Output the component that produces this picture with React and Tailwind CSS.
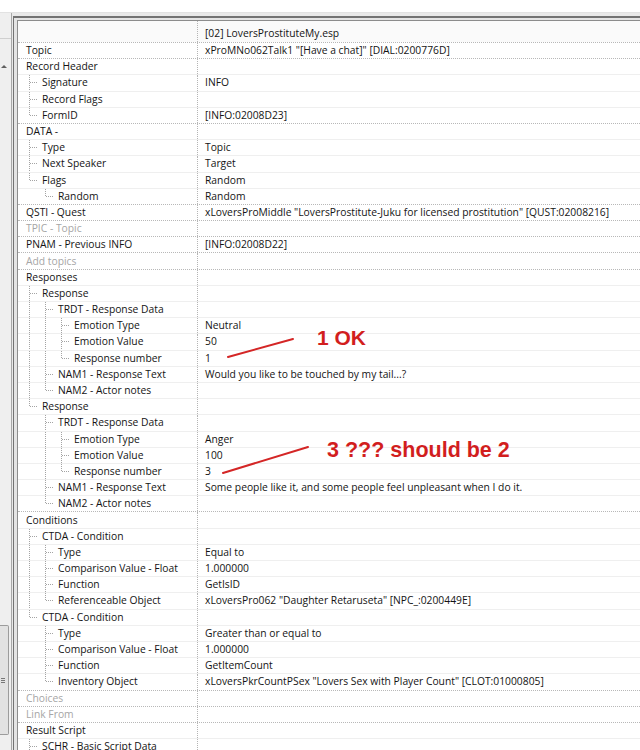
import React from "react";

const tree = [
  { label: "Topic", value: 'xProMNo062Talk1 "[Have a chat]" [DIAL:0200776D]' },
  {
    label: "Record Header",
    children: [
      { label: "Signature", value: "INFO" },
      { label: "Record Flags" },
      { label: "FormID", value: "[INFO:02008D23]" },
    ],
  },
  {
    label: "DATA -",
    children: [
      { label: "Type", value: "Topic" },
      { label: "Next Speaker", value: "Target" },
      { label: "Flags", value: "Random", children: [{ label: "Random", value: "Random" }] },
    ],
  },
  {
    label: "QSTI - Quest",
    value: 'xLoversProMiddle "LoversProstitute-Juku for licensed prostitution" [QUST:02008216]',
  },
  { label: "TPIC - Topic", muted: true },
  { label: "PNAM - Previous INFO", value: "[INFO:02008D22]" },
  { label: "Add topics", muted: true },
  {
    label: "Responses",
    children: [
      {
        label: "Response",
        children: [
          {
            label: "TRDT - Response Data",
            children: [
              { label: "Emotion Type", value: "Neutral" },
              { label: "Emotion Value", value: "50" },
              { label: "Response number", value: "1" },
            ],
          },
          { label: "NAM1 - Response Text", value: "Would you like to be touched by my tail...?" },
          { label: "NAM2 - Actor notes" },
        ],
      },
      {
        label: "Response",
        children: [
          {
            label: "TRDT - Response Data",
            children: [
              { label: "Emotion Type", value: "Anger" },
              { label: "Emotion Value", value: "100" },
              { label: "Response number", value: "3" },
            ],
          },
          {
            label: "NAM1 - Response Text",
            value: "Some people like it, and some people feel unpleasant when I do it.",
          },
          { label: "NAM2 - Actor notes" },
        ],
      },
    ],
  },
  {
    label: "Conditions",
    children: [
      {
        label: "CTDA - Condition",
        children: [
          { label: "Type", value: "Equal to" },
          { label: "Comparison Value - Float", value: "1.000000" },
          { label: "Function", value: "GetIsID" },
          {
            label: "Referenceable Object",
            value: 'xLoversPro062 "Daughter Retaruseta" [NPC_:0200449E]',
          },
        ],
      },
      {
        label: "CTDA - Condition",
        children: [
          { label: "Type", value: "Greater than or equal to" },
          { label: "Comparison Value - Float", value: "1.000000" },
          { label: "Function", value: "GetItemCount" },
          {
            label: "Inventory Object",
            value: 'xLoversPkrCountPSex "Lovers Sex with Player Count" [CLOT:01000805]',
          },
        ],
      },
    ],
  },
  { label: "Choices", muted: true },
  { label: "Link From", muted: true },
  {
    label: "Result Script",
    children: [
      { label: "SCHR - Basic Script Data" },
      { label: "SCTX - Script Source" },
    ],
  },
];

// flatten the tree so every row knows which guide lines to draw
const flatten = (nodes, depth, parentsLast, out) => {
  nodes.forEach((n, i) => {
    const last = i === nodes.length - 1;
    out.push({ ...n, depth, parentsLast, last });
    if (n.children) flatten(n.children, depth + 1, [...parentsLast, last], out);
  });
  return out;
};

const rows = flatten(tree, 0, [], []);

const Guides = ({ depth, parentsLast, last }) => {
  const w = 8 + 16 * depth;
  const lines = [];
  for (let k = 1; k < depth; k++) {
    if (!parentsLast[k]) {
      const x = 11.5 + 16 * (k - 1);
      lines.push(<line key={k} x1={x} y1="0" x2={x} y2="16" />);
    }
  }
  if (depth > 0) {
    const x = 11.5 + 16 * (depth - 1);
    lines.push(<line key="v" x1={x} y1="0" x2={x} y2={last ? 8 : 16} />);
    lines.push(<line key="h" x1={x} y1="7.5" x2={x + 8} y2="7.5" />);
  }
  return (
    <svg
      width={w}
      height="15"
      className="shrink-0"
      stroke="#a4a4a4"
      strokeWidth="1"
      strokeDasharray="1 1"
      shapeRendering="crispEdges"
    >
      {lines}
    </svg>
  );
};

const Row = ({ row }) => (
  <div
    className={`flex h-[16.2px] shrink-0 border-t ${
      row.depth === 0 ? "border-dotted border-[#b8b8b8]" : "border-solid border-[#efefef]"
    }`}
  >
    <div className="flex w-[180px] shrink-0 items-center border-r border-dotted border-[#b4b4b4]">
      <Guides depth={row.depth} parentsLast={row.parentsLast} last={row.last} />
      <span className={`whitespace-nowrap ${row.muted ? "text-[#a6a6a6]" : "text-[#141414]"}`}>
        {row.label}
      </span>
    </div>
    <div className="flex items-center whitespace-nowrap pl-[7px] text-[#141414]">{row.value}</div>
  </div>
);

export default function App() {
  return (
    <div className="relative flex h-[750px] w-[640px] flex-col overflow-hidden bg-white font-['Open_Sans',sans-serif] text-[10.3px] leading-[15px]">
      <div className="h-[13px] shrink-0 border-b border-[#e2e2e2] bg-white" />
      <div className="flex min-h-0 flex-1">
        {/* edge of the neighbouring list with its scrollbar */}
        <div className="flex w-[12px] shrink-0 flex-col border-r border-[#a8a8a8] bg-[#efefef]">
          <div className="h-[26px] shrink-0 border-b border-[#cfcfcf]" />
          <div className="mt-[26px] ml-[1px] h-0 w-0 border-x-[3px] border-b-[3px] border-x-transparent border-b-[#606060]" />
          <div className="mt-[557px] flex h-[110px] w-[9px] flex-col items-start justify-center gap-[1px] rounded-r-[2px] border border-l-0 border-[#9c9c9c] bg-[#e2e2e2] pl-[1px]">
            <div className="h-px w-[4px] bg-[#777]" />
            <div className="h-px w-[4px] bg-[#777]" />
            <div className="h-px w-[4px] bg-[#777]" />
          </div>
        </div>

        <div className="flex min-w-0 flex-1 flex-col bg-[#e9e9e9] pt-[3px] pl-[1px]">
          <div className="flex min-h-0 flex-1 flex-col border-t-2 border-l border-[#737373]">
            <div className="flex min-h-0 flex-1 flex-col bg-[#e4e4e4] pt-[2px] pl-[3px]">
              <div className="flex min-h-0 flex-1 flex-col border-t border-l border-[#8c8c8c] bg-white">
                <div className="flex h-[21px] shrink-0 bg-[#fafafa]">
                  <div className="w-[180px] shrink-0 border-r border-dotted border-[#b4b4b4]" />
                  <div className="flex items-center pt-[3px] pl-[7px] text-[#141414]">
                    [02] LoversProstituteMy.esp
                  </div>
                </div>
                {rows.map((row, i) => (
                  <Row key={i} row={row} />
                ))}
              </div>
            </div>
          </div>
        </div>
      </div>

      {/* red notes drawn over the grid */}
      <svg className="pointer-events-none absolute inset-0" width="640" height="750">
        <line x1="228" y1="357" x2="293" y2="339" stroke="#d42626" strokeWidth="2" strokeLinecap="round" />
        <line x1="223" y1="473" x2="308" y2="447" stroke="#d42626" strokeWidth="2" strokeLinecap="round" />
      </svg>
      <div className="absolute top-[327px] left-[317px] font-['Liberation_Sans',Arial,sans-serif] text-[21px] leading-[21px] font-bold text-[#d21e1e]">
        1 OK
      </div>
      <div className="absolute top-[440px] left-[327px] font-['Liberation_Sans',Arial,sans-serif] text-[21.5px] leading-[21px] font-bold text-[#d21e1e]">
        3 ??? should be 2
      </div>
    </div>
  );
}
